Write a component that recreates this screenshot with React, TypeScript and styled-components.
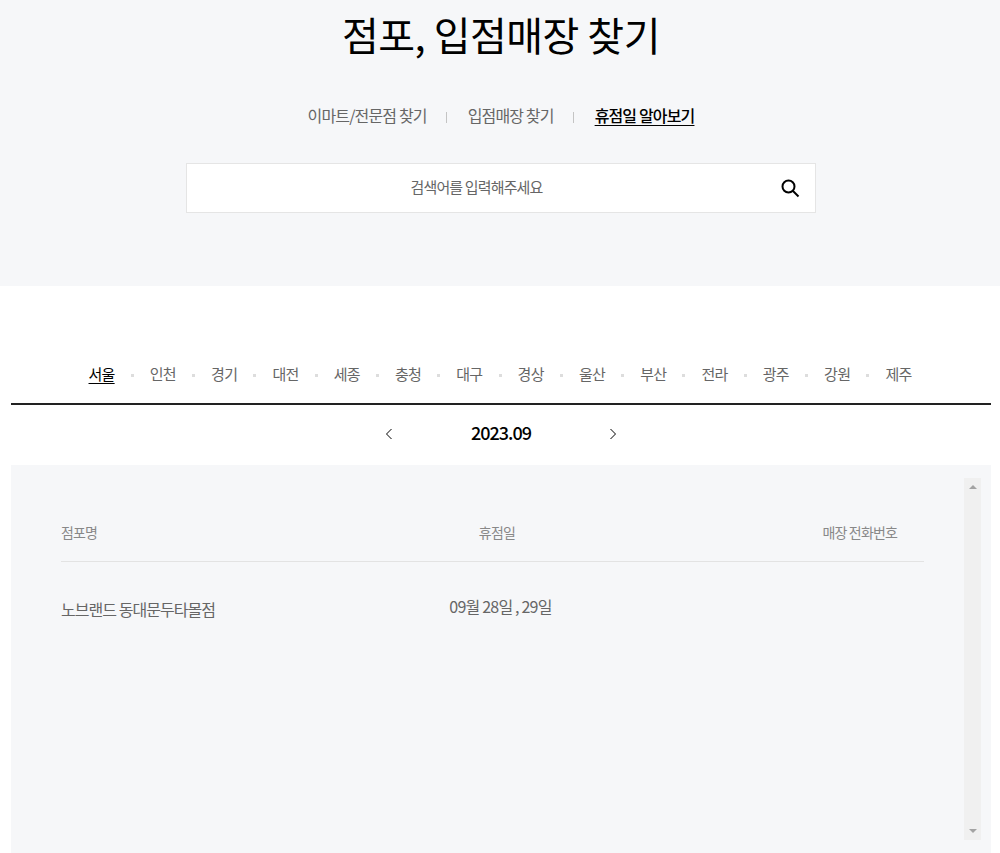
import React from "react";
import styled, { createGlobalStyle } from "styled-components";

const GlobalStyle = createGlobalStyle`
  html, body {
    margin: 0;
    padding: 0;
    height: 853px;
    overflow: hidden;
    background: #fff;
    font-family: "Noto Sans CJK KR", "Noto Sans", sans-serif;
  }
  * { box-sizing: border-box; }
`;

const Hero = styled.section`
  height: 286px;
  background: #f6f7f9;
  padding-left: 2px;
  display: flex;
  flex-direction: column;
  align-items: center;
`;
const Title = styled.h1`
  margin: 0;
  height: 68px;
  font-size: 40px;
  line-height: 68px;
  font-weight: 400;
  letter-spacing: -0.5px;
  color: #000;
`;
const StoreTabs = styled.ul`
  display: flex;
  align-items: center;
  list-style: none;
  margin: 33px 0 0;
  padding: 0;
  height: 28px;
`;
const StoreTab = styled.li<{ $active?: boolean }>`
  font-size: 16px;
  line-height: 22px;
  letter-spacing: -0.85px;
  color: ${(p) => (p.$active ? "#000" : "#666")};
  font-weight: ${(p) => (p.$active ? 500 : 400)};
  text-decoration: ${(p) => (p.$active ? "underline" : "none")};
  text-underline-offset: 3px;
  &:not(:first-child)::before {
    content: "";
    display: inline-block;
    width: 1px;
    height: 11px;
    background: #c4c4c4;
    margin: 0 20.5px 0 19.5px;
    vertical-align: -1px;
  }
`;
const SearchBox = styled.div`
  position: relative;
  width: 630px;
  height: 50px;
  margin: 34px 0 0 -1px;
  padding-right: 48px;
  background: #fff;
  border: 1px solid #e5e5e5;
  display: flex;
  align-items: center;
  justify-content: center;
`;
const SearchPlaceholder = styled.span`
  font-size: 15px;
  letter-spacing: -0.85px;
  color: #666;
  margin-top: -3px;
`;
const SearchButton = styled.button`
  position: absolute;
  right: 15px;
  top: 14px;
  width: 20px;
  height: 20px;
  padding: 0;
  border: 0;
  background: none;
`;

const Content = styled.main`
  width: 980px;
  margin: 0 0 0 11px;
`;
const Regions = styled.ul`
  display: flex;
  justify-content: center;
  list-style: none;
  margin: 0;
  padding: 74px 2px 0 0;
  height: 119px;
  border-bottom: 2px solid #222;
  align-items: flex-start;
`;
const Region = styled.li<{ $active?: boolean }>`
  font-size: 15px;
  line-height: 28px;
  letter-spacing: -0.75px;
  white-space: nowrap;
  color: ${(p) => (p.$active ? "#000" : "#666")};
  text-decoration: ${(p) => (p.$active ? "underline" : "none")};
  text-underline-offset: 3px;
  &:not(:first-child)::before {
    content: "";
    display: inline-block;
    width: 3px;
    height: 3px;
    background: #ddd;
    margin: 0 16.1px;
    vertical-align: 3px;
  }
`;
const MonthRow = styled.div`
  height: 60px;
  display: flex;
  align-items: center;
  justify-content: center;
  gap: 72px;
  padding: 0 0 3px;
`;
const MonthText = styled.strong`
  width: 72px;
  text-align: center;
  font-size: 18px;
  font-weight: 500;
  letter-spacing: -1px;
  color: #000;
  margin-top: -3px;
`;
const MonthArrow = styled.svg`
  width: 8px;
  height: 12px;
  fill: none;
  stroke: #000;
  stroke-width: 1;
`;
const Panel = styled.section`
  position: relative;
  height: 400px;
  background: #f6f7f9;
  padding: 50px 67px 0 50px;
`;
const TableRow = styled.div<{ $head?: boolean }>`
  display: grid;
  grid-template-columns: 1fr 1fr 1fr;
  align-items: center;
  height: ${(p) => (p.$head ? "47px" : "93px")};
  border-bottom: ${(p) => (p.$head ? "1px solid #e3e3e3" : "none")};
  color: ${(p) => (p.$head ? "#888" : "#666")};
  font-size: ${(p) => (p.$head ? "14px" : "16px")};
  letter-spacing: ${(p) => (p.$head ? "-0.85px" : "-0.95px")};
`;
const NameCell = styled.div<{ $head?: boolean }>`
  margin-top: ${(p) => (p.$head ? "-12px" : "0")};
`;
const DateCell = styled.div<{ $head?: boolean }>`
  text-align: center;
  letter-spacing: -0.8px;
  margin: ${(p) => (p.$head ? "-12px 0 0 9px" : "-6px 0 0 16px")};
`;
const PhoneCell = styled.div<{ $head?: boolean }>`
  text-align: right;
  margin: ${(p) => (p.$head ? "-12px 27px 0 0" : "0")};
`;
const Scrollbar = styled.div`
  position: absolute;
  top: 13px;
  right: 10px;
  width: 17px;
  height: 362px;
  background: #f0f0f0;
  display: flex;
  flex-direction: column;
  justify-content: space-between;
  align-items: center;
  padding: 7px 0;
`;
const ScrollArrow = styled.span<{ $down?: boolean }>`
  width: 0;
  height: 0;
  border-left: 4px solid transparent;
  border-right: 4px solid transparent;
  border-bottom: ${(p) => (p.$down ? "0" : "4px solid #a3a3a3")};
  border-top: ${(p) => (p.$down ? "4px solid #a3a3a3" : "0")};
`;

const storeTabs = ["이마트/전문점 찾기", "입점매장 찾기", "휴점일 알아보기"];
const regions = ["서울", "인천", "경기", "대전", "세종", "충청", "대구", "경상", "울산", "부산", "전라", "광주", "강원", "제주"];

export default function App() {
  return (
    <>
      <GlobalStyle />
      <Hero>
        <Title>점포, 입점매장 찾기</Title>
        <StoreTabs>
          {storeTabs.map((tab, i) => (
            <StoreTab key={tab} $active={i === 2}>
              {tab}
            </StoreTab>
          ))}
        </StoreTabs>
        <SearchBox>
          <SearchPlaceholder>검색어를 입력해주세요</SearchPlaceholder>
          <SearchButton aria-label="검색">
            <svg width="20" height="20" viewBox="0 0 20 20" fill="none" stroke="#000" strokeWidth="2">
              <circle cx="8.5" cy="8.5" r="6" />
              <path d="M13 13l5.5 5.5" />
            </svg>
          </SearchButton>
        </SearchBox>
      </Hero>
      <Content>
        <Regions>
          {regions.map((r, i) => (
            <Region key={r} $active={i === 0}>
              {r}
            </Region>
          ))}
        </Regions>
        <MonthRow>
          <MonthArrow viewBox="0 0 8 12">
            <path d="M6.5 1L1.5 6l5 5" />
          </MonthArrow>
          <MonthText>2023.09</MonthText>
          <MonthArrow viewBox="0 0 8 12">
            <path d="M1.5 1l5 5-5 5" />
          </MonthArrow>
        </MonthRow>
        <Panel>
          <TableRow $head>
            <NameCell $head>점포명</NameCell>
            <DateCell $head>휴점일</DateCell>
            <PhoneCell $head>매장 전화번호</PhoneCell>
          </TableRow>
          <TableRow>
            <NameCell>노브랜드 동대문두타몰점</NameCell>
            <DateCell>09월 28일 , 29일</DateCell>
            <PhoneCell />
          </TableRow>
          <Scrollbar>
            <ScrollArrow />
            <ScrollArrow $down />
          </Scrollbar>
        </Panel>
      </Content>
    </>
  );
}
